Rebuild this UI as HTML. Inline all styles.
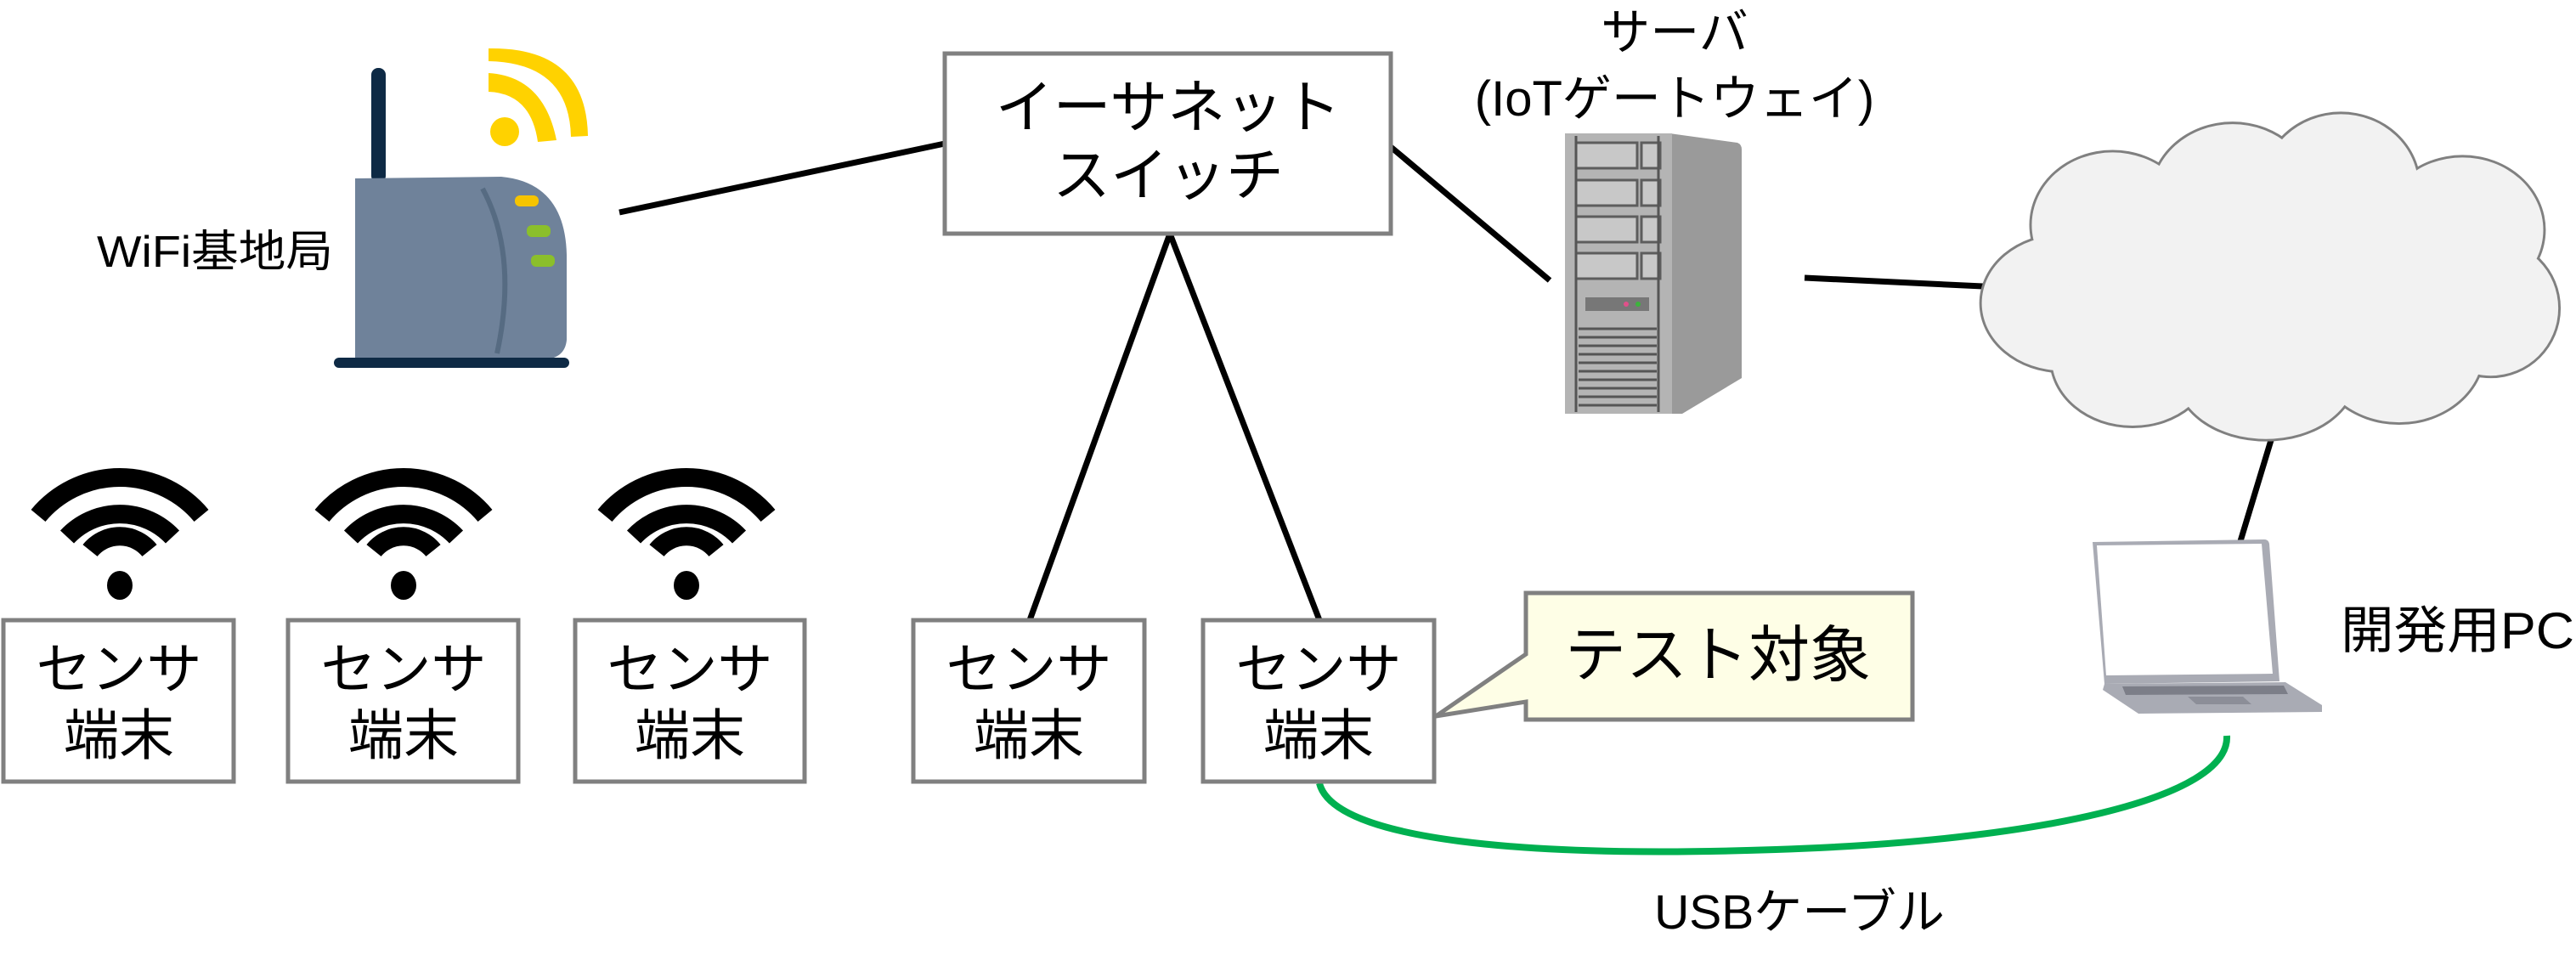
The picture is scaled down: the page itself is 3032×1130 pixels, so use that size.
<!DOCTYPE html>
<html><head><meta charset="utf-8"><style>
html,body{margin:0;padding:0;background:#fff;}
svg{display:block}
text{font-family:"Liberation Sans","Noto Sans CJK JP",sans-serif;fill:#000}
</style></head><body>
<svg width="3032" height="1130" viewBox="0 0 3032 1130" xmlns="http://www.w3.org/2000/svg">
<g stroke="#000" stroke-width="7" fill="none">
<line x1="729" y1="250" x2="1112" y2="169"/>
<line x1="1377" y1="275" x2="1212" y2="730"/>
<line x1="1377" y1="275" x2="1553" y2="730"/>
<line x1="1637" y1="173" x2="1824" y2="330"/>
<line x1="2124" y1="327" x2="2334" y2="337"/>
<line x1="2677" y1="505" x2="2637" y2="637"/>
</g>
<path d="M1553 922 C1570 990 1800 1010 2090 1000 C2400 990 2625 940 2621 866" stroke="#00b050" stroke-width="8" fill="none"/>
<rect x="1112" y="63" width="525" height="212" fill="#fff" stroke="#808080" stroke-width="5"/>
<text x="1375" y="150" font-size="68" text-anchor="middle">イーサネット</text>
<text x="1375" y="230" font-size="68" text-anchor="middle">スイッチ</text>
<text x="114" y="314" font-size="52" textLength="278" lengthAdjust="spacingAndGlyphs">WiFi基地局</text>
<!-- router -->
<rect x="437" y="80" width="17" height="135" rx="8" fill="#0e2a45"/>
<path d="M418 210 L590 208 Q665 215 667 300 L667 400 Q665 422 640 423 L418 423 Z" fill="#6f829a"/>
<path d="M568 222 Q610 300 585 416" stroke="#566b82" stroke-width="6" fill="none"/>
<rect x="606" y="230" width="28" height="13" rx="6" fill="#f6c400"/>
<rect x="620" y="265" width="28" height="14" rx="6" fill="#8bbf2b"/>
<rect x="625" y="300" width="28" height="14" rx="6" fill="#8bbf2b"/>
<rect x="393" y="421" width="277" height="12" rx="6" fill="#0e2a45"/>
<g fill="#ffd200"><circle cx="594" cy="155" r="17"/>
<path d="M575 108 L575 86 Q640 90 655 165 L633 167 Q625 110 575 108Z"/>
<path d="M575 72 L575 57 Q690 55 692 160 L672 161 Q670 74 575 72Z"/></g>
<!-- wifi icons -->
<g id="wf">
<g stroke="#000" stroke-width="22" fill="none">
<path d="M45 637 A125 125 0 0 1 237 637" transform="translate(0,-30)"/>
<path d="M79 632 A85 85 0 0 1 203 632"/>
<path d="M106 648 A45 45 0 0 1 176 648"/>
</g>
<ellipse cx="141" cy="689" rx="15" ry="17" fill="#000"/>
</g>
<use href="#wf" x="334"/>
<use href="#wf" x="667"/>
<!-- sensor boxes -->
<g fill="#fff" stroke="#808080" stroke-width="5">
<rect x="4" y="730" width="271" height="190"/>
<rect x="339" y="730" width="271" height="190"/>
<rect x="677" y="730" width="270" height="190"/>
<rect x="1075" y="730" width="272" height="190"/>
<rect x="1416" y="730" width="272" height="190"/>
</g>
<g font-size="65" text-anchor="middle">
<text x="140" y="810">センサ</text><text x="140" y="888">端末</text>
<text x="475" y="810">センサ</text><text x="475" y="888">端末</text>
<text x="812" y="810">センサ</text><text x="812" y="888">端末</text>
<text x="1211" y="810">センサ</text><text x="1211" y="888">端末</text>
<text x="1552" y="810">センサ</text><text x="1552" y="888">端末</text>
</g>
<!-- callout -->
<path d="M1796 698 L2251 698 L2251 847 L1796 847 L1796 826 L1690 843 L1796 770 Z" fill="#fefee6" stroke="#808080" stroke-width="5"/>
<text x="2022" y="796" font-size="72" text-anchor="middle">テスト対象</text>
<!-- server -->
<text x="1971" y="58" font-size="58" text-anchor="middle">サーバ</text>
<text x="1971" y="136" font-size="58" text-anchor="middle">(IoTゲートウェイ)</text>
<path d="M1965 157 L2045 168 Q2050 170 2050 176 L2050 445 L1980 487 L1965 487Z" fill="#9a9a9a"/>
<rect x="1842" y="157" width="126" height="330" fill="#b4b4b4"/>
<g stroke="#5d5d5d" stroke-width="3" fill="#c8c8c8">
<rect x="1855" y="168" width="72" height="30"/><rect x="1932" y="168" width="22" height="30"/>
<rect x="1855" y="212" width="72" height="30"/><rect x="1932" y="212" width="22" height="30"/>
<rect x="1855" y="255" width="72" height="30"/><rect x="1932" y="255" width="22" height="30"/>
<rect x="1855" y="298" width="72" height="30"/><rect x="1932" y="298" width="22" height="30"/>
</g>
<rect x="1866" y="350" width="75" height="16" fill="#777"/>
<circle cx="1914" cy="358" r="3" fill="#e0508a"/><circle cx="1928" cy="358" r="3" fill="#3cb43c"/>
<g stroke="#555" stroke-width="3">
<line x1="1858" y1="387" x2="1950" y2="387"/><line x1="1858" y1="397" x2="1950" y2="397"/>
<line x1="1858" y1="407" x2="1950" y2="407"/><line x1="1858" y1="417" x2="1950" y2="417"/>
<line x1="1858" y1="427" x2="1950" y2="427"/><line x1="1858" y1="437" x2="1950" y2="437"/>
<line x1="1858" y1="447" x2="1950" y2="447"/><line x1="1858" y1="457" x2="1950" y2="457"/>
<line x1="1858" y1="467" x2="1950" y2="467"/><line x1="1858" y1="477" x2="1950" y2="477"/>
<line x1="1855" y1="160" x2="1855" y2="485"/><line x1="1952" y1="160" x2="1952" y2="485"/>
</g>
<!-- cloud -->
<g transform="scale(1.961)">
<g fill="#808080">
<ellipse cx="1238" cy="182" rx="50" ry="42"/><ellipse cx="1268" cy="135" rx="50" ry="45"/>
<ellipse cx="1340" cy="118" rx="50" ry="45"/><ellipse cx="1405" cy="112" rx="48" ry="45"/>
<ellipse cx="1478" cy="138" rx="50" ry="45"/><ellipse cx="1495" cy="185" rx="42" ry="42"/>
<ellipse cx="1440" cy="210" rx="52" ry="45"/><ellipse cx="1360" cy="225" rx="55" ry="40"/>
<ellipse cx="1280" cy="215" rx="50" ry="42"/><ellipse cx="1360" cy="170" rx="100" ry="60"/>
</g>
<g fill="#f2f2f2">
<ellipse cx="1238" cy="182" rx="48.5" ry="40.5"/><ellipse cx="1268" cy="135" rx="48.5" ry="43.5"/>
<ellipse cx="1340" cy="118" rx="48.5" ry="43.5"/><ellipse cx="1405" cy="112" rx="46.5" ry="43.5"/>
<ellipse cx="1478" cy="138" rx="48.5" ry="43.5"/><ellipse cx="1495" cy="185" rx="40.5" ry="40.5"/>
<ellipse cx="1440" cy="210" rx="50.5" ry="43.5"/><ellipse cx="1360" cy="225" rx="53.5" ry="38.5"/>
<ellipse cx="1280" cy="215" rx="48.5" ry="40.5"/><ellipse cx="1360" cy="170" rx="100" ry="60"/>
</g>
</g>
<!-- laptop -->
<path d="M2463 638 L2665 635 Q2670 635 2671 640 L2683 802 L2477 805 Z" fill="#a9abb4"/>
<path d="M2468 642 L2662 640 L2675 793 L2479 795 Z" fill="#fff"/>
<path d="M2477 805 L2690 803 L2733 830 L2733 838 L2517 840 L2475 812 Z" fill="#a9abb4"/>
<path d="M2498 808 L2688 807 L2693 817 L2502 818 Z" fill="#7c7e88"/>
<path d="M2575 820 L2640 820 L2650 829 L2585 829 Z" fill="#8c8e98"/>
<text x="2755" y="763" font-size="60" textLength="275" lengthAdjust="spacingAndGlyphs">開発用PC</text>
<text x="2118" y="1093" font-size="57" text-anchor="middle">USBケーブル</text>
</svg>
</body></html>
